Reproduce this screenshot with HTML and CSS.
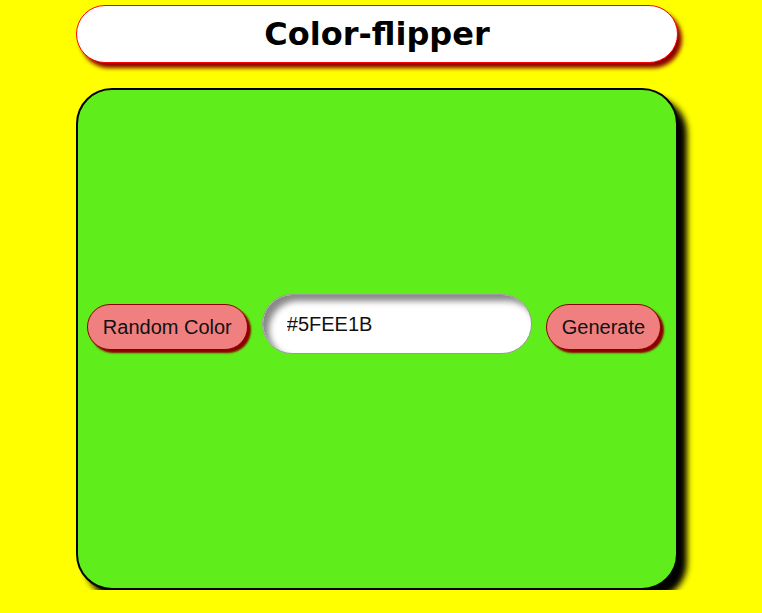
FILE: index.html
```html
<!DOCTYPE html>
<html>
<head>
<meta charset="utf-8">
<link rel="stylesheet" href="styles.css">
</head>
<body>
<div class="page">
  <header class="title-bar"><h1 class="title">Color-flipper</h1></header>
  <main class="stage">
    <button class="btn">Random Color</button>
    <input class="hex" type="text" value="#5FEE1B">
    <button class="btn">Generate</button>
  </main>
</div>
</body>
</html>
```

FILE: styles.css
```css
html, body {
  margin: 0;
  padding: 0;
  background: #ffff00;
}
.page {
  width: 602px;
  margin-left: 76px;
  padding-top: 5px;
  display: flex;
  flex-direction: column;
  gap: 25px;
}
.title-bar {
  box-sizing: border-box;
  height: 58px;
  border: 1px solid #ff0000;
  border-radius: 29px;
  background: #ffffff;
  box-shadow: 4px 5px 4px #8b0000;
  display: flex;
  align-items: center;
  justify-content: center;
}
.title {
  margin: 0;
  font-family: "DejaVu Sans", Verdana, sans-serif;
  font-weight: bold;
  font-size: 32px;
  color: #000;
}
.stage {
  box-sizing: border-box;
  height: 502px;
  border: 2px solid #000;
  border-radius: 36px;
  background: #5fee1b;
  box-shadow: 9px 9px 6px #000;
  display: flex;
  align-items: center;
  justify-content: center;
  gap: 14px;
  padding-right: 6px;
  padding-bottom: 24px;
}
.btn {
  font-family: "Liberation Sans", Arial, sans-serif;
  font-size: 20px;
  color: #111;
  background: #f08080;
  border: 1px solid #8b0000;
  border-radius: 23px;
  height: 46px;
  padding: 0 15px;
  box-shadow: 3px 3px 2px #8b0000;
}
.hex {
  box-sizing: border-box;
  width: 270px;
  height: 60px;
  margin-bottom: 6px;
  border: 1px solid #999;
  border-radius: 30px;
  background: #fff;
  box-shadow: inset 6px 6px 6px #888;
  font-family: "Liberation Sans", Arial, sans-serif;
  font-size: 20px;
  color: #111;
  padding: 0 24px;
  outline: none;
}
```
